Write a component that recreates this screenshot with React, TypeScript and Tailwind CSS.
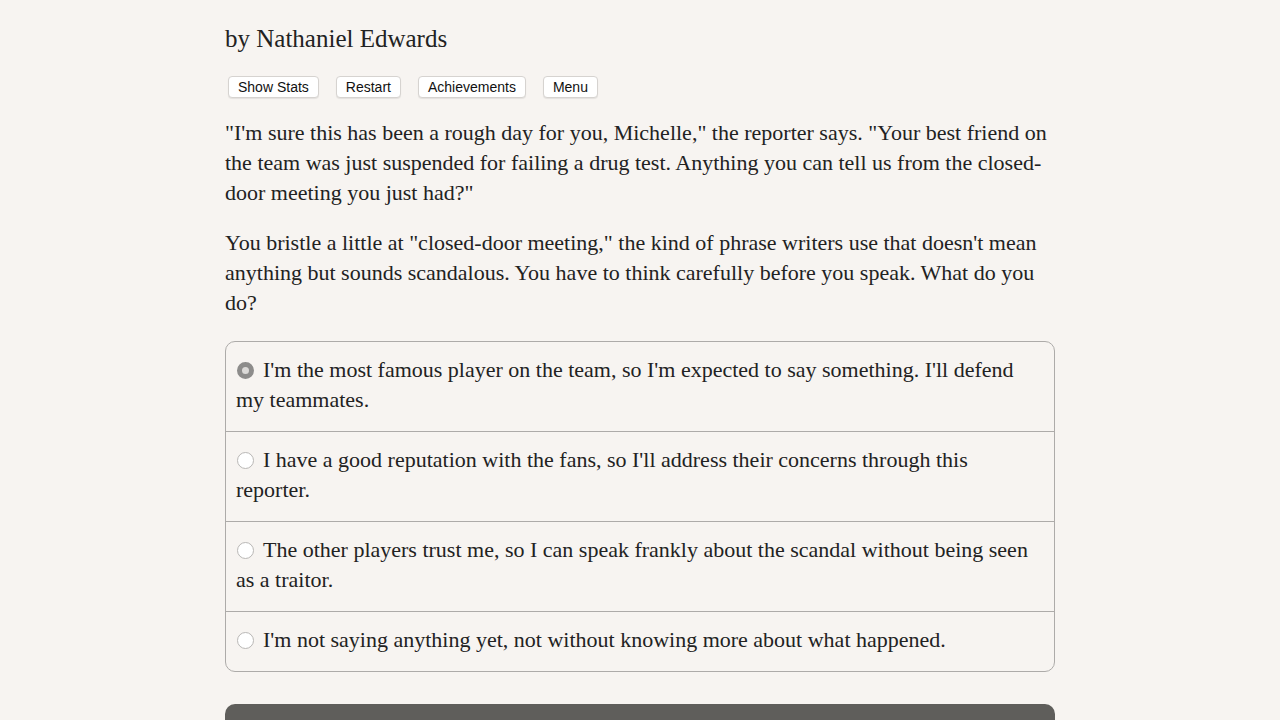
import React from "react";

const serif = { fontFamily: '"Liberation Serif", "Times New Roman", serif' };

function Radio({ checked }: { checked?: boolean }) {
  if (checked) {
    return (
      <span className="inline-block w-[17px] h-[17px] rounded-full bg-[#dcdad8] border-[5px] border-[#8d8c8b] align-[-2px] mr-[9px] ml-[1px]" />
    );
  }
  return (
    <span className="inline-block w-[17px] h-[17px] rounded-full bg-white border border-[#b9b7b5] align-[-2px] mr-[9px] ml-[1px]" />
  );
}

const choices: { text: React.ReactNode; checked?: boolean }[] = [
  {
    text: (
      <>
        I'm the most famous player on the team, so I'm expected to say something. I'll defend
        <br />
        my teammates.
      </>
    ),
    checked: true,
  },
  {
    text: (
      <>
        I have a good reputation with the fans, so I'll address their concerns through this
        <br />
        reporter.
      </>
    ),
  },
  {
    text: (
      <>
        The other players trust me, so I can speak frankly about the scandal without being seen
        <br />
        as a traitor.
      </>
    ),
  },
  {
    text: <>I'm not saying anything yet, not without knowing more about what happened.</>,
  },
];

export default function App() {
  return (
    <div className="min-h-[720px] h-[720px] overflow-hidden bg-[#f7f4f1] text-[#222]">
      <div className="w-[830px] mx-auto pt-[23px]" style={serif}>
        <div className="text-[25px] leading-[32px]">by Nathaniel Edwards</div>
        <div className="flex gap-[17px] mt-[21px] ml-[3px]" style={{ fontFamily: '"Liberation Sans", Arial, sans-serif' }}>
          {["Show Stats", "Restart", "Achievements", "Menu"].map((b) => (
            <button
              key={b}
              className="h-[22px] px-[9px] text-[14px] leading-[20px] bg-white border border-[#d6d3d0] rounded-[4px] text-[#111] shadow-[0_1px_1px_rgba(0,0,0,0.08)]"
            >
              {b}
            </button>
          ))}
        </div>
        <div className="text-[22px] leading-[30px] mt-[20px]">
          <p>
            "I'm sure this has been a rough day for you, Michelle," the reporter says. "Your best friend on
            <br />
            the team was just suspended for failing a drug test. Anything you can tell us from the closed-
            <br />
            door meeting you just had?"
          </p>
          <p className="mt-[20px]">
            You bristle a little at "closed-door meeting," the kind of phrase writers use that doesn't mean
            <br />
            anything but sounds scandalous. You have to think carefully before you speak. What do you
            <br />
            do?
          </p>
        </div>
        <div className="mt-[23px] border border-[#adaba9] rounded-[10px] overflow-hidden">
          {choices.map((c, i) => (
            <div
              key={i}
              className={`px-[10px] pt-[13px] pb-[16px] text-[22px] leading-[30px] ${i > 0 ? "border-t border-[#adaba9]" : ""}`}
            >
              <Radio checked={c.checked} />
              {c.text}
            </div>
          ))}
        </div>
        <div className="mt-[32px] h-[50px] rounded-[10px] bg-[#5f5e5b] text-white text-center text-[22px] font-bold leading-[30px] pt-[10px]">
          Next
        </div>
      </div>
    </div>
  );
}
